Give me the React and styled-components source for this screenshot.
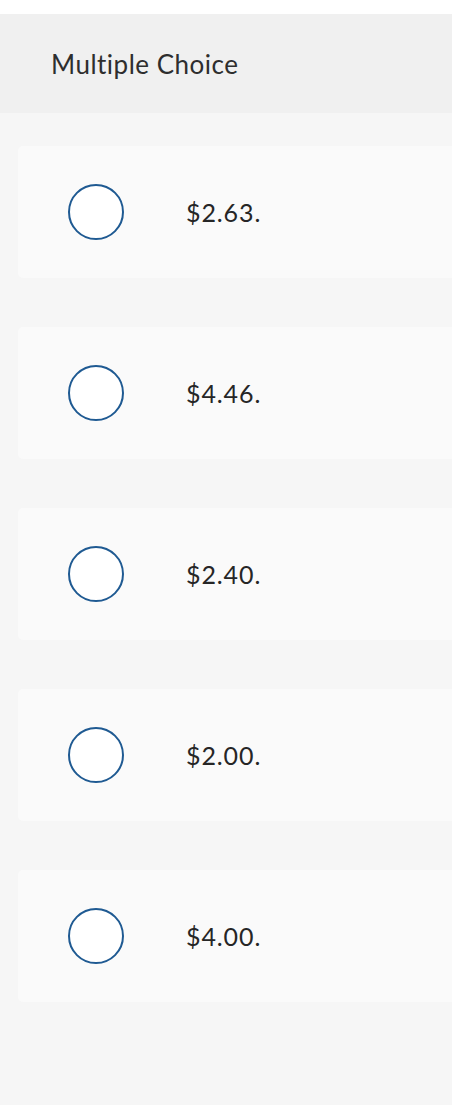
import React from "react";
import styled, { createGlobalStyle } from "styled-components";

const GlobalStyle = createGlobalStyle`
  html, body {
    margin: 0;
    padding: 0;
    background: #ffffff;
  }
  body {
    font-family: Lato, "Open Sans", "Liberation Sans", sans-serif;
    color: #222222;
  }
`;

const Page = styled.div`
  width: 452px;
  height: 1105px;
  padding-top: 14px;
  box-sizing: border-box;
  overflow: hidden;
  background: #ffffff;
  display: flex;
  flex-direction: column;
`;

const Header = styled.header`
  height: 99px;
  flex: none;
  background: #f0f0f0;
  display: flex;
  align-items: center;
  padding-left: 51px;
  box-sizing: border-box;
`;

const Title = styled.h2`
  margin: 0;
  font-size: 26px;
  font-weight: 400;
  color: #2e2e2e;
  letter-spacing: 0.5px;
`;

const Choices = styled.div`
  flex: 1;
  background: #f6f6f6;
  padding: 33px 0 0 18px;
  display: flex;
  flex-direction: column;
  gap: 49px;
`;

const Choice = styled.label`
  width: 480px;
  height: 132px;
  flex: none;
  background: #fafafa;
  border-radius: 5px;
  display: flex;
  align-items: center;
  padding-left: 50px;
  box-sizing: border-box;
  gap: 62px;
  cursor: pointer;
`;

const Radio = styled.span`
  width: 56px;
  height: 56px;
  flex: none;
  border-radius: 50%;
  border: 2px solid #1f5a92;
  background: #ffffff;
  box-sizing: border-box;
`;

const Answer = styled.span`
  font-size: 25px;
  color: #262626;
  letter-spacing: 0.9px;
`;

const answers = ["$2.63.", "$4.46.", "$2.40.", "$2.00.", "$4.00."];

export default function App() {
  return (
    <>
      <GlobalStyle />
      <Page>
        <Header>
          <Title>Multiple Choice</Title>
        </Header>
        <Choices>
          {answers.map((a) => (
            <Choice key={a}>
              <Radio />
              <Answer>{a}</Answer>
            </Choice>
          ))}
        </Choices>
      </Page>
    </>
  );
}
